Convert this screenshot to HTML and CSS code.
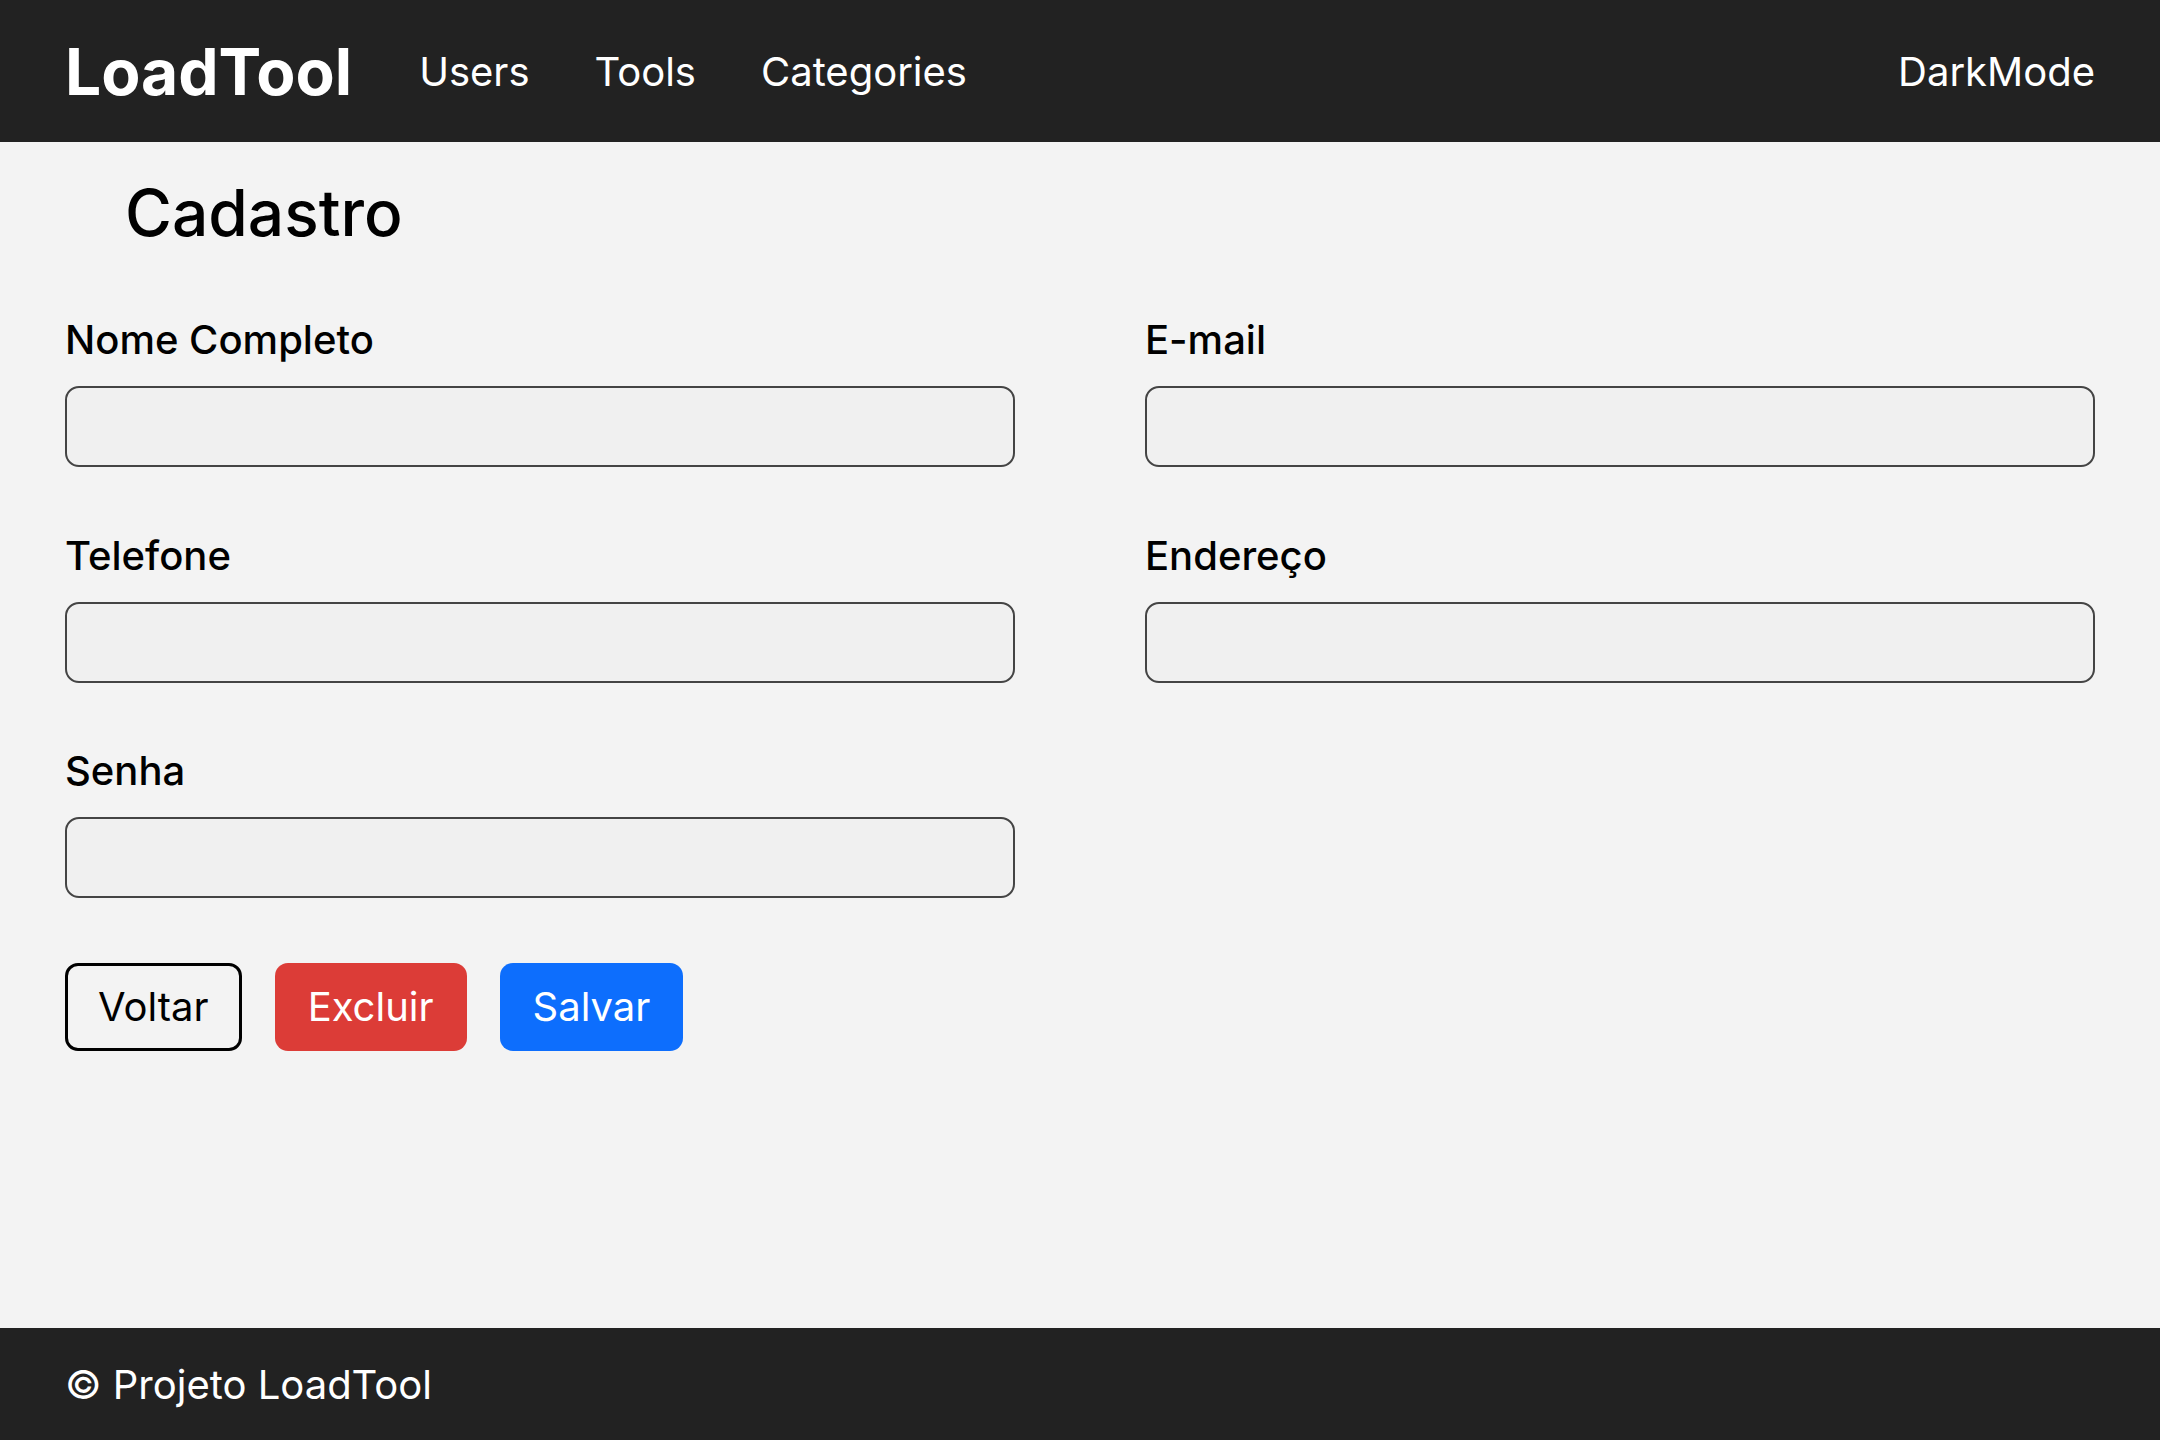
FILE: index.html
```html
<!DOCTYPE html>
<html lang="pt-BR">
<head>
<meta charset="utf-8">
<title>LoadTool - Cadastro</title>
<link rel="stylesheet" href="styles.css">
</head>
<body>
<header class="topbar">
  <a class="brand" href="#">LoadTool</a>
  <nav class="nav">
    <a class="nav-link" href="#">Users</a>
    <a class="nav-link" href="#">Tools</a>
    <a class="nav-link" href="#">Categories</a>
  </nav>
  <a class="nav-link darkmode" href="#">DarkMode</a>
</header>
<main class="content">
  <h1 class="title">Cadastro</h1>
  <form class="form">
    <div class="field">
      <label class="label" for="nome">Nome Completo</label>
      <input class="input" id="nome" type="text">
    </div>
    <div class="field">
      <label class="label" for="email">E-mail</label>
      <input class="input" id="email" type="email">
    </div>
    <div class="field">
      <label class="label" for="tel">Telefone</label>
      <input class="input" id="tel" type="text">
    </div>
    <div class="field">
      <label class="label" for="end">Endereço</label>
      <input class="input" id="end" type="text">
    </div>
    <div class="field">
      <label class="label" for="senha">Senha</label>
      <input class="input" id="senha" type="password">
    </div>
    <div class="actions">
      <button type="button" class="btn btn-outline">Voltar</button>
      <button type="button" class="btn btn-danger">Excluir</button>
      <button type="button" class="btn btn-primary">Salvar</button>
    </div>
  </form>
</main>
<footer class="footer">© Projeto LoadTool</footer>
</body>
</html>
```
FILE: styles.css
```css
* { box-sizing: border-box; }
html, body { margin: 0; padding: 0; }
body {
  font-family: Inter, "Noto Sans", sans-serif;
  background: #f3f3f3;
  color: #000;
  min-height: 100vh;
  display: flex;
  flex-direction: column;
}
.topbar {
  height: 142px;
  background: #222222;
  display: flex;
  align-items: center;
  padding: 0 65px;
}
.brand {
  color: #fff;
  text-decoration: none;
  font-size: 64px;
  font-weight: 700;
}
.nav {
  display: flex;
  gap: 65px;
  margin-left: 67px;
}
.nav-link {
  color: #fff;
  text-decoration: none;
  font-size: 40px;
  font-weight: 400;
}
.darkmode { margin-left: auto; }
.content {
  flex: 1;
  padding: 0 65px;
}
.title {
  margin: 32px 0 0 60px;
  font-size: 64px;
  font-weight: 500;
  line-height: normal;
}
.form {
  display: grid;
  grid-template-columns: 950px 950px;
  column-gap: 130px;
  row-gap: 63.5px;
  margin-top: 64px;
}
.field {
  display: flex;
  flex-direction: column;
  gap: 22px;
}
.label {
  font-size: 40px;
  font-weight: 500;
  line-height: normal;
}
.input {
  height: 81px;
  width: 100%;
  background: #f0f0f0;
  border: 2px solid #444;
  border-radius: 14px;
  font: inherit;
  font-size: 36px;
  padding: 0 20px;
}
.actions {
  grid-column: 1 / 3;
  display: flex;
  gap: 33px;
  margin-top: 1px;
}
.btn {
  height: 88px;
  padding: 0 30px;
  border: 3px solid transparent;
  border-radius: 13px;
  font-family: inherit;
  font-size: 40px;
  font-weight: 400;
  cursor: pointer;
}
.btn-outline {
  background: transparent;
  border: 3.5px solid #000;
  color: #000;
}
.btn-danger {
  background: #dc3c37;
  color: #fff;
}
.btn-primary {
  background: #0d6efd;
  color: #fff;
}
.footer {
  height: 112px;
  background: #222222;
  color: #fff;
  font-size: 40px;
  display: flex;
  align-items: center;
  padding: 0 65px;
}
```
